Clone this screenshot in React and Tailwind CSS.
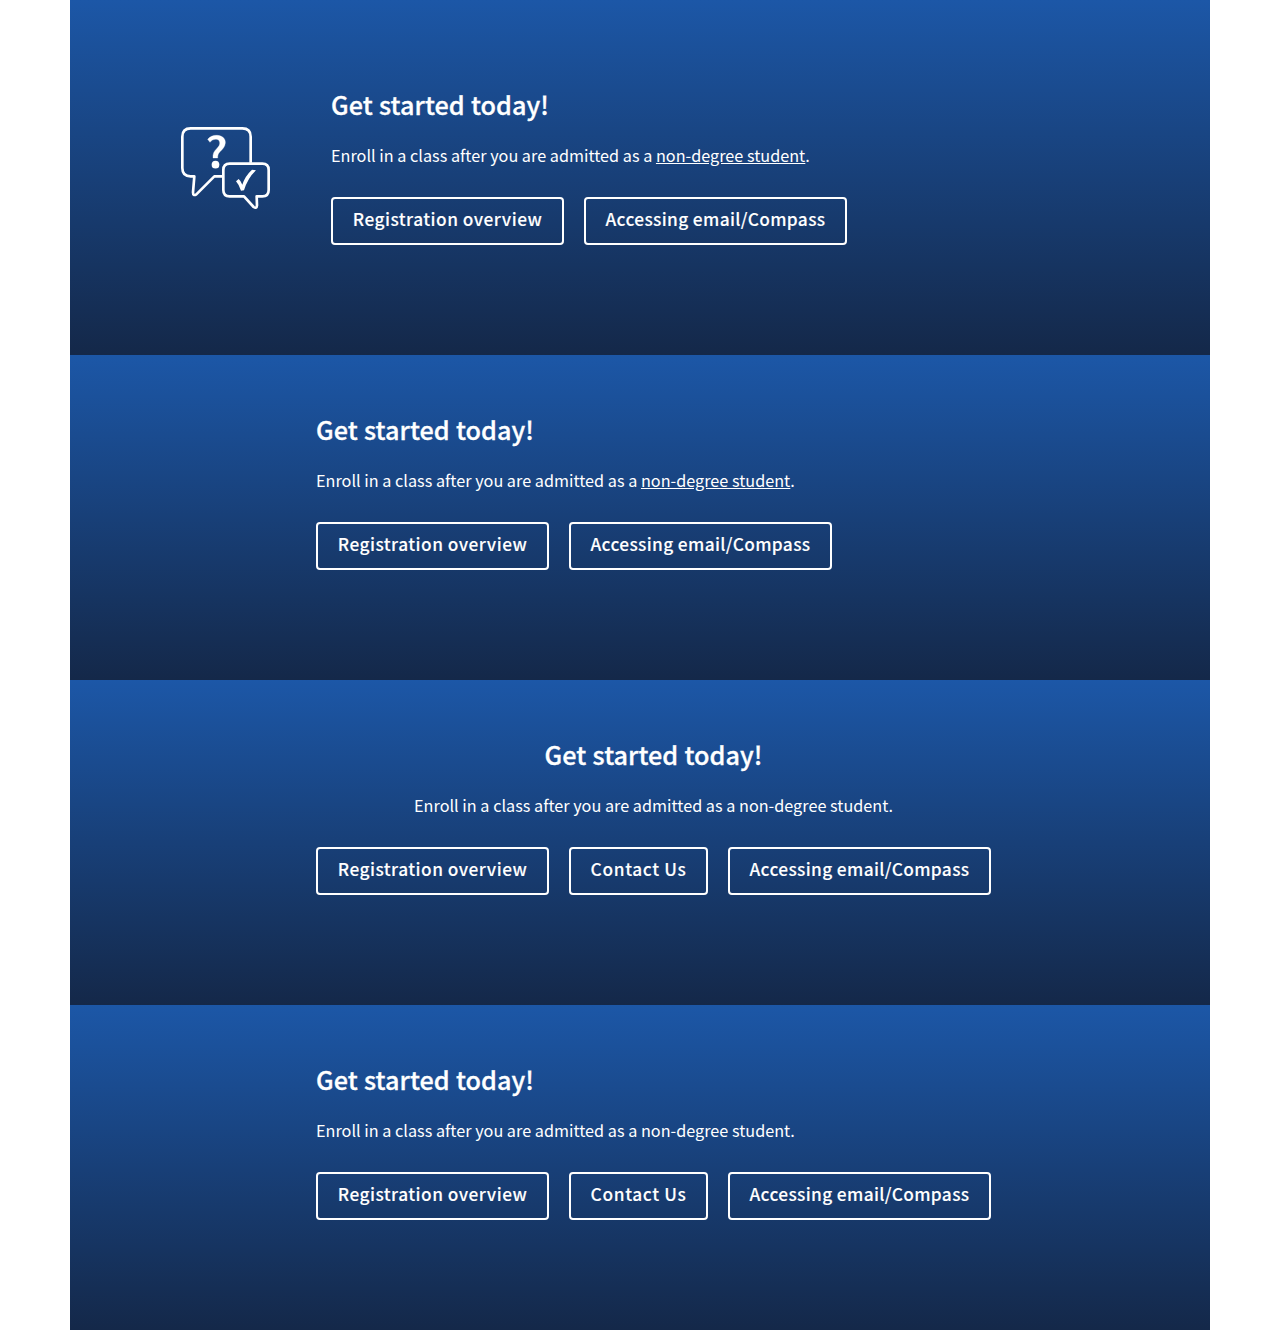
const BUTTONS = {
  registration: { label: "Registration overview", style: "w-[233px] tracking-[0.48px]" },
  contact: { label: "Contact Us", style: "w-[139px] tracking-[0.65px]" },
  email: { label: "Accessing email/Compass", style: "w-[263px] tracking-[0.36px]" },
};

function ChatIcon() {
  return (
    <svg
      className="mt-[47px] mr-[60px] h-[84px] w-[90px] shrink-0"
      viewBox="33 36 270 252"
      fill="none"
      stroke="white"
      strokeWidth="8"
      strokeLinejoin="round"
      aria-hidden="true"
    >
      <path d="M158 184H133L79 238Q69 244 69 232L73 184H62Q37 184 37 159V65Q37 40 62 40H217Q242 40 242 65V143" />
      <path d="M179 146H277Q296 146 296 165V225Q296 244 277 244H260L261 271Q260 282 251 276L222 244H179Q160 244 160 225V165Q160 146 179 146Z" />
      <path
        d="M113 73C120 64 131 60 142 61C157 62 167 71 166 84C165 96 157 103 150 110C144 116 143 121 143 129H129C128 116 132 109 140 101C148 93 150 89 149 82C148 75 143 72 137 73C130 73 124 76 120 82Z"
        fill="white"
        stroke="white"
        strokeWidth="1"
      />
      <circle cx="136.500" cy="149" r="11.500" fill="white" stroke="none" />
      <path
        d="M198 199L206 192Q213 198 217 209Q225 183 246 164L258 166Q233 190 222 226L213 227Q207 209 198 199Z"
        fill="white"
        stroke="none"
      />
    </svg>
  );
}

function CallToAction({ icon, linked, centered, buttons }) {
  return (
    <section
      className={
        "flex items-start bg-linear-to-b/srgb from-[#1c57a7] to-[#142849] " +
        (icon ? "h-[355px] pt-20 pl-[111px]" : "h-[325px] pt-[50px] pl-[246px]")
      }
    >
      {icon && <ChatIcon />}
      <div className={centered ? "text-center" : "text-left"}>
        <h2 className="h-[50px] text-[25.2px] leading-[48px] font-medium tracking-[0.04px] [word-spacing:0.6px] [-webkit-text-stroke:0.3px_white]">
          Get started today!
        </h2>
        <p className="mt-[9px] text-[16.2px] leading-8 tracking-[0.02px]">
          Enroll in a class after you are admitted as a{" "}
          {linked ? (
            <a href="#" className="underline">
              non-degree student
            </a>
          ) : (
            "non-degree student"
          )}
          .
        </p>
        <div className="mt-[26px] flex gap-5">
          {buttons.map((name) => (
            <a
              key={name}
              href="#"
              className={
                "h-12 rounded border-2 border-white text-center text-[17.3px] leading-[40px] font-medium whitespace-nowrap [-webkit-text-stroke:0.1px_white] " +
                BUTTONS[name].style
              }
            >
              {BUTTONS[name].label}
            </a>
          ))}
        </div>
      </div>
    </section>
  );
}

export default function App() {
  return (
    <main className="mx-auto w-[1140px] font-['Noto_Sans_CJK_SC',sans-serif] text-white">
      <CallToAction icon linked buttons={["registration", "email"]} />
      <CallToAction linked buttons={["registration", "email"]} />
      <CallToAction centered buttons={["registration", "contact", "email"]} />
      <CallToAction buttons={["registration", "contact", "email"]} />
    </main>
  );
}
